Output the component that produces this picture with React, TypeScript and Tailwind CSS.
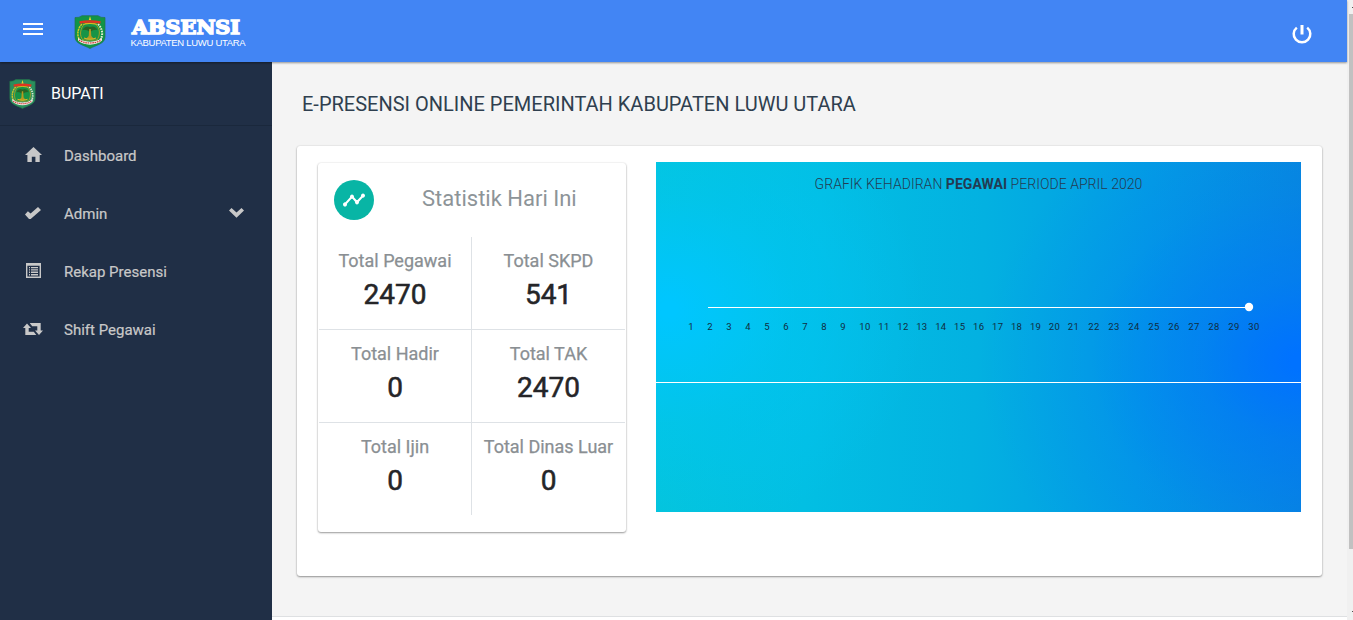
import React from "react";
import { MdTimeline } from "react-icons/md";

const stats: [string, string][] = [
  ["Total Pegawai", "2470"],
  ["Total SKPD", "541"],
  ["Total Hadir", "0"],
  ["Total TAK", "2470"],
  ["Total Ijin", "0"],
  ["Total Dinas Luar", "0"],
];

const dayX = (day: number) => {
  if (day < 10) return 35 + (day - 1) * 19;
  if (day < 22) return 209 + (day - 10) * 18.95;
  return 438 + (day - 22) * 20;
};

const days = Array.from({ length: 30 }, (_, i) => i + 1);

function Crest({ className, green }: { className: string; green: string }) {
  return (
    <svg className={className} viewBox="0 0 32 34" preserveAspectRatio="none">
      <path d="M1 2.5Q5 3 8 .7H24Q27 3 31 2.5V22C31 29 22 30 16 33.5C10 30 1 29 1 22Z" fill={green} stroke="#23744a" strokeWidth=".7" />
      <path d="M8 9C2 15 3 24 8 27" fill="none" stroke="#d8c820" strokeWidth="1.5" strokeDasharray="2.2 .6" />
      <path d="M24 9C30 15 29 24 24 27" fill="none" stroke="#e4ecd0" strokeWidth="2" strokeDasharray="1.6 1" />
      <path d="M11 8.5H21C27 13 26 21 23 25H9C5 21 6 13 11 8.5Z" fill="#169447" stroke="#b5a11d" strokeWidth=".9" />
      <path d="M5.5 7.6Q16 5.4 26.5 7.6" fill="none" stroke="#df3420" strokeWidth="2.6" />
      <path d="M9 9.4Q16 7.4 23 9.4" fill="none" stroke="#e9c524" strokeWidth=".8" />
      <path d="M16 1.2L17.2 5H14.8Z" fill="#efd52c" />
      <path d="M8.5 15Q11 10 16 12Q21 10 23.5 15Q20 14 16 17Q12 14 8.5 15Z" fill="#2a6424" />
      <path d="M15.2 14H16.8L17.3 21L20 24H12L14.7 21Z" fill="#b59a20" />
      <path d="M10 23Q16 25.5 22 23" fill="none" stroke="#e0b627" strokeWidth="1.1" />
      <path d="M4 22.5C8 28 24 28 28 22.5V25.5C23 31 9 31 4 25.5Z" fill="#f3e9e4" />
      <path d="M5 25C10 29 22 29 27 25" fill="none" stroke="#cb3b36" strokeWidth="1.2" strokeDasharray="1.6 .7" />
    </svg>
  );
}

const HomeIcon = () => (
  <svg className="mb-[3px] h-[15px] w-[17px]" viewBox="0 0 17 15" fill="currentColor">
    <path d="M8.5 0L17 8H14.7V15H10.4V9.7H6.8V15H2.4V8H0Z" />
  </svg>
);
const CheckIcon = () => (
  <svg className="mb-[2px] h-[12px] w-[16px]" viewBox="0 0 16 12" fill="currentColor">
    <path d="M0 7.4L2.9 4.2L5.6 6.4L13 0L16 2.9L5.7 12H4Z" />
  </svg>
);
const ListIcon = () => (
  <svg className="mb-[3px] h-[15px] w-[15px]" viewBox="0 0 15 15" fill="currentColor">
    <path fillRule="evenodd" d="M0 0H15V15H0ZM1.4 2.8V13.6H13.6V2.8Z" />
    <path d="M3 4H4V5.2H3ZM5 4H12V5.2H5ZM3 6.2H4V7.6H3ZM5 6.2H12V7.6H5ZM3 8.6H4V10H3ZM5 8.6H12V10H5ZM3 11H4V12.4H3ZM5 11H12V12.4H5Z" />
  </svg>
);
const ShiftIcon = () => (
  <svg className="mb-[2px] h-[12px] w-[20px]" viewBox="0 0 20 12" fill="currentColor">
    <path d="M4 .5L8 5H5.7V8.8H10.8L13.3 12H2.3V5H0Z" />
    <path d="M6.7 0H17.7V7.5H20L16 12L12 7.5H14.3V3.2H9.2Z" />
  </svg>
);

const menu = [
  { label: "Dashboard", Icon: HomeIcon },
  { label: "Admin", Icon: CheckIcon, expandable: true },
  { label: "Rekap Presensi", Icon: ListIcon },
  { label: "Shift Pegawai", Icon: ShiftIcon },
];

function Header() {
  return (
    <header className="relative z-10 flex h-[62px] shrink-0 bg-[#4285f4] text-white shadow-[0_1px_2px_rgba(0,0,0,0.4)]">
      <svg className="mt-[23px] ml-[23px] h-3 w-5 shrink-0" viewBox="0 0 20 12" fill="currentColor">
        <path d="M0 0H20V2H0ZM0 5H20V7H0ZM0 10H20V12H0Z" />
      </svg>
      <Crest className="mt-[15px] ml-[31px] h-[34px] w-8 shrink-0" green="#119447" />
      <div className="mt-[11px] ml-6 flex flex-col">
        <svg className="h-[25px] w-[120px] overflow-visible" viewBox="0 0 120 25">
          <text x="2" y="22.6" textLength="108" lengthAdjust="spacingAndGlyphs" fontSize="18.2" fontWeight="700" fill="white" stroke="white" strokeWidth="1.5" fontFamily="DejaVu Serif, serif">ABSENSI</text>
        </svg>
        <span className="ml-[0.5px] font-['Liberation_Sans',sans-serif] text-[9.5px] leading-[13px] tracking-[-0.3px] whitespace-nowrap">KABUPATEN LUWU UTARA</span>
      </div>
      <svg className="mt-[24px] mr-[35px] ml-auto h-5 w-5" viewBox="0 0 20 20" fill="none" stroke="currentColor" strokeWidth="2.5">
        <path d="M4.8 3.6A8.3 8.3 0 1 0 15.2 3.6" />
        <path d="M10 1V10.5" strokeWidth="3" />
      </svg>
    </header>
  );
}

function Sidebar() {
  return (
    <aside className="flex w-[272px] shrink-0 flex-col bg-[#202f46]">
      <div className="flex h-16 items-center border-b border-[#1a283c]">
        <Crest className="ml-[9px] h-[30px] w-[27px]" green="#2a8f5d" />
        <span className="ml-[15px] text-base text-white">BUPATI</span>
      </div>
      <nav className="flex flex-col pt-px text-[#c8c8c8]">
        {menu.map(({ label, Icon, expandable }) => (
          <div key={label} className="flex h-[58px] items-center">
            <span className="ml-[23px] flex w-[20px] justify-center"><Icon /></span>
            <span className="ml-[21px] text-[15px] [-webkit-text-stroke:0.2px_#c8c8c8]">{label}</span>
            {expandable && (
              <svg className="mr-7 mb-[2px] ml-auto h-[10px] w-[15px]" viewBox="0 0 15 10" fill="currentColor">
                <path d="M0 2.5L2.5 0L7.5 4.6L12.5 0L15 2.5L7.5 9.7Z" />
              </svg>
            )}
          </div>
        ))}
      </nav>
    </aside>
  );
}

function StatsCard() {
  return (
    <section className="flex h-[369px] w-[308px] shrink-0 flex-col rounded-[3px] bg-white px-px shadow-[0_1px_2px_rgba(0,0,0,0.38),0_0_2px_rgba(0,0,0,0.12)]">
      <div className="flex h-[74px] items-start pt-[17px] pl-[15px]">
        <span className="flex h-10 w-10 items-center justify-center rounded-full bg-[#08b5a5] text-white">
          <MdTimeline className="h-[22px] w-[22px]" preserveAspectRatio="none" viewBox="1 2 22 20" />
        </span>
        <h2 className="ml-12 pt-[3px] text-[22px] leading-8 font-normal whitespace-nowrap text-[#8d9498]">Statistik Hari Ini</h2>
      </div>
      <div className="grid grid-cols-2">
        {stats.map(([label, value], i) => (
          <div
            key={label}
            className={`flex flex-col items-center border-[#dee2e6] ${i % 2 ? "" : "border-r"} ${i < 4 ? "h-[93px] border-b" : "h-[92px]"}`}
          >
            <span className="mt-3 text-lg leading-6 whitespace-nowrap text-[#8a8f93] [-webkit-text-stroke:0.25px_#8a8f93]">{label}</span>
            <span className="mt-1 text-[28px] leading-9 text-[#252528] [-webkit-text-stroke:0.55px_#252528]">{value}</span>
          </div>
        ))}
      </div>
    </section>
  );
}

function ChartCard() {
  return (
    <section className="flex h-[350px] w-[645px] flex-col bg-[radial-gradient(ellipse_40%_65%_at_2%_42%,#00c6ff_3%,rgba(0,198,255,0.35)_50%,rgba(0,198,255,0)_100%),radial-gradient(ellipse_50%_75%_at_100%_57%,#0072ff_3%,rgba(0,114,255,0.5)_30%,rgba(0,114,255,0.15)_65%,rgba(0,114,255,0)_100%),linear-gradient(93deg,#04c5da_0%,#02bfe3_25%,#03b1e1_50%,#039be4_75%,#0886dd_100%)]">
      <div className="flex h-[221px] flex-col border-b border-white">
        <h3 className="mt-3 text-center text-[14px] leading-5 font-[350] tracking-[0.04px] text-[#243b52]">
          GRAFIK KEHADIRAN <b className="font-bold">PEGAWAI</b> PERIODE APRIL 2020
        </h3>
        <svg className="h-[188px] w-full" viewBox="0 0 645 188">
          <path d="M52 113.5H593" stroke="white" strokeWidth="1" />
          <circle cx="593" cy="113" r="4.2" fill="white" />
          {days.map((day) => (
            <text key={day} x={dayX(day)} y="136" textAnchor="middle" fontSize="9.5" letterSpacing=".3" fill="#102c40">{day}</text>
          ))}
        </svg>
      </div>
    </section>
  );
}

export default function App() {
  return (
    <div className="flex h-[620px] w-[1353px] overflow-hidden bg-[#f4f4f4] font-[Roboto,sans-serif]">
      <div className="flex w-[1347px] shrink-0 flex-col">
        <Header />
        <div className="flex min-h-0 flex-1">
          <Sidebar />
          <div className="flex flex-1 flex-col">
            <main className="flex h-[554px] flex-col pl-[25px]">
              <h1 className="mt-[28px] ml-[5px] text-[20px] leading-7 font-normal text-[#2f3f4f]">E-PRESENSI ONLINE PEMERINTAH KABUPATEN LUWU UTARA</h1>
              <div className="mt-7 flex h-[430px] w-[1025px] items-start rounded-[3px] bg-white pt-4 pl-[21px] shadow-[0_1px_2px_rgba(0,0,0,0.38),0_0_2px_rgba(0,0,0,0.12)]">
                <div className="pt-px"><StatsCard /></div>
                <div className="ml-[30px]"><ChartCard /></div>
              </div>
            </main>
            <footer className="flex-1 border-t border-[#dee0e2] bg-white" />
          </div>
        </div>
      </div>
      <div className="flex w-[6px] shrink-0 flex-col items-end bg-[#f0f0f0]">
        <div className="mt-[7px] h-px w-px bg-[#505050]" />
        <div className="mt-[6px] h-[535px] w-1 bg-[#c1c1c1]" />
        <div className="mt-[62px] h-px w-px bg-[#505050]" />
      </div>
    </div>
  );
}
